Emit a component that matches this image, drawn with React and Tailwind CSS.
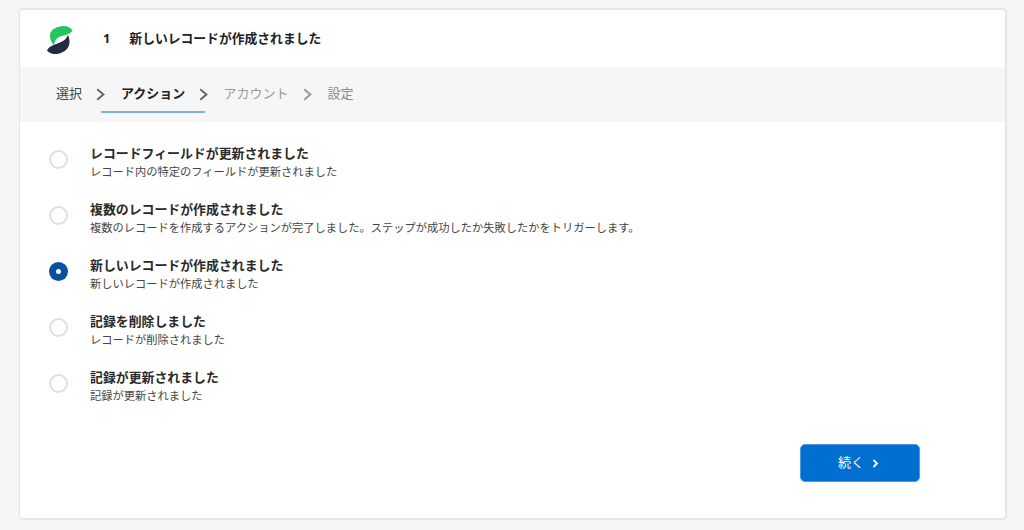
import React from "react";

const FONT = "font-['Open_Sans','Noto_Sans_CJK_JP',sans-serif]";

function Chevron() {
  return (
    <svg width="9" height="13" viewBox="0 0 9 13" fill="none">
      <path d="M1.2 1.2 L7.4 6.5 L1.2 11.8" stroke="currentColor" strokeWidth="2" />
    </svg>
  );
}

function Logo() {
  return (
    <svg width="26" height="28" viewBox="0 0 26 28" className="shrink-0 mt-[2px]">
      <path d="M25.5 4.5 C23.5 1 19 -0.5 14.5 0.2 C8 1 3 4.5 3 9.5 C3 13.5 4.5 17 7 19 C7.5 15 9.5 12 12.5 10.8 C16.5 9 22.5 9 25.5 4.5 Z" fill="#22c55e" />
      <path d="M0 24.5 C2.5 27.5 7 28.8 11.5 27.8 C18 26.2 22.5 22 22.5 16 C22.5 13 21.8 10.5 21 9 C19.5 12.5 17 14.8 13.5 16.3 C9 18.5 2.5 19.5 0 24.5 Z" fill="#232b3e" />
    </svg>
  );
}

function Option({ title, desc, checked }) {
  return (
    <div className="flex items-center h-[56px]">
      {checked ? (
        <div className="w-[19px] h-[19px] rounded-full bg-[#0b4ea2] flex items-center justify-center shrink-0">
          <div className="w-[5px] h-[5px] rounded-full bg-white" />
        </div>
      ) : (
        <div className="w-[19px] h-[19px] rounded-full bg-white border-2 border-[#e0e0e0] shrink-0" />
      )}
      <div className="ml-[22px] flex flex-col pt-[8px]">
        <div className="text-[12.9px] leading-[16px] font-bold text-[#2a2a2a]">{title}</div>
        <div className="text-[11.25px] leading-[21px] text-[#444]">{desc}</div>
      </div>
    </div>
  );
}

export default function App() {
  return (
    <div className={`${FONT} w-[1024px] h-[530px] bg-[#f5f5f5] pt-[8px] pl-[19px] overflow-hidden`}>
      <div className="w-[988px] h-[512px] bg-white rounded-[4px] border-l border-r-2 border-b-2 border-t-2 border-[#e6e6e6] flex flex-col">
        <div className="h-[57px] flex items-center pl-[27px]">
          <Logo />
          <span className="ml-[30px] text-[12.8px] font-bold text-[#222]">1</span>
          <span className="ml-[19px] text-[12.8px] font-bold text-[#222]">新しいレコードが作成されました</span>
        </div>
        <div className="h-[55px] bg-[#f6f6f6] flex items-stretch pl-[36px] pb-[1px] text-[13px]">
          <div className="flex items-center text-[#444]">選択</div>
          <div className="flex items-center ml-[14px] text-[#666]"><Chevron /></div>
          <div className="flex items-center ml-[-4px] pl-[20px] pr-[20px] pt-[9px] h-[46px] border-b-2 border-[#7db0e6] font-bold text-[#222] self-start">アクション</div>
          <div className="flex items-center ml-[-6px] text-[#666]"><Chevron /></div>
          <div className="flex items-center ml-[15px] text-[#9a9a9a]">アカウント</div>
          <div className="flex items-center ml-[15px] text-[#9a9a9a]"><Chevron /></div>
          <div className="flex items-center ml-[15px] text-[#8a8a8a]">設定</div>
        </div>
        <div className="flex flex-col pl-[29px] pt-[9px]">
          <Option title="レコードフィールドが更新されました" desc="レコード内の特定のフィールドが更新されました" />
          <Option title="複数のレコードが作成されました" desc="複数のレコードを作成するアクションが完了しました。ステップが成功したか失敗したかをトリガーします。" />
          <Option checked title="新しいレコードが作成されました" desc="新しいレコードが作成されました" />
          <Option title="記録を削除しました" desc="レコードが削除されました" />
          <Option title="記録が更新されました" desc="記録が更新されました" />
        </div>
        <div className="flex justify-end pr-[85px] mt-[33px]">
          <button className="w-[120px] h-[38px] rounded-[5px] bg-[#006fd1] border border-[#4d9be0] text-white text-[13px] flex items-center justify-center gap-[8px] pr-[3px]">
            続く
            <svg width="7" height="9" viewBox="0 0 7 9" fill="none"><path d="M1.5 1 L5 4.5 L1.5 8" stroke="currentColor" strokeWidth="1.8" /></svg>
          </button>
        </div>
      </div>
    </div>
  );
}
